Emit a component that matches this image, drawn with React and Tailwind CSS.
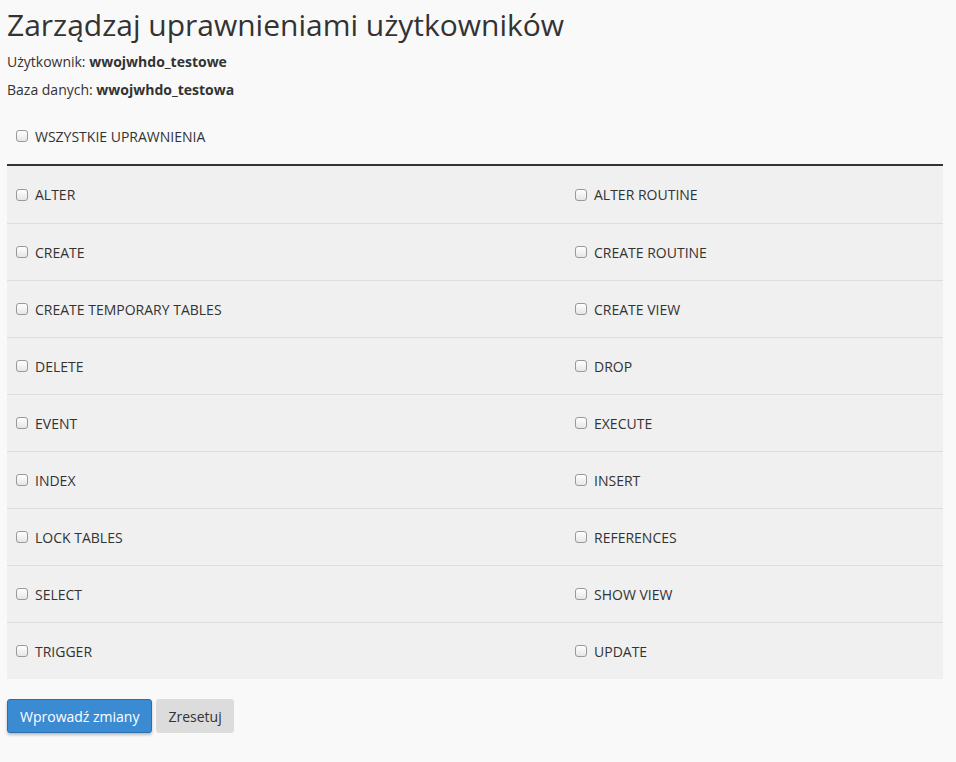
const rows = [["ALTER","ALTER ROUTINE"],["CREATE","CREATE ROUTINE"],["CREATE TEMPORARY TABLES","CREATE VIEW"],["DELETE","DROP"],["EVENT","EXECUTE"],["INDEX","INSERT"],["LOCK TABLES","REFERENCES"],["SELECT","SHOW VIEW"],["TRIGGER","UPDATE"]];
const Cb = ({label}) => (
  <label className="flex items-center gap-[7px] text-[14px] text-[#333]">
    <span className="w-[12px] h-[12px] rounded-[3px] border border-[#999] bg-gradient-to-b from-white to-[#e6e6e6] shrink-0" />
    {label}
  </label>
);
export default function App(){
  return (
    <div className="min-h-[762px] bg-[#f9f9f9] px-[7px] pr-[13px] text-[#333]" style={{fontFamily:'"Open Sans", sans-serif'}}>
      <h1 className="text-[30px] leading-[36px] pt-[7px] text-[#333]">Zarządzaj uprawnieniami użytkowników</h1>
      <p className="text-[14px] leading-[20px] mt-[9px]">Użytkownik: <b>wwojwhdo_testowe</b></p>
      <p className="text-[14px] leading-[20px] mt-[8px]">Baza danych: <b>wwojwhdo_testowa</b></p>
      <div className="pl-[9px] h-[20px] mt-[26px] flex items-center"><Cb label="WSZYSTKIE UPRAWNIENIA" /></div>
      <div className="mt-[18px] border-t-2 border-[#333]">
        {rows.map((r,i)=>(
          <div key={i} className={`grid grid-cols-[559px_1fr] items-center h-[57px] bg-[#f0f0f0] pl-[9px] ${i>0?'border-t border-[#ddd]':''}`}>
            <Cb label={r[0]} /><Cb label={r[1]} />
          </div>
        ))}
      </div>
      <div className="flex gap-[4px] mt-[20px]">
        <button className="h-[34px] px-[12px] text-[14px] text-white bg-[#3b8bd3] border border-[#2a6fb0] rounded-[3px] shadow-[0_2px_3px_rgba(0,0,0,0.25)]">Wprowadź zmiany</button>
        <button className="h-[34px] px-[12px] text-[14px] text-[#333] bg-[#dcdcdc] rounded-[3px]">Zresetuj</button>
      </div>
    </div>
  );
}
